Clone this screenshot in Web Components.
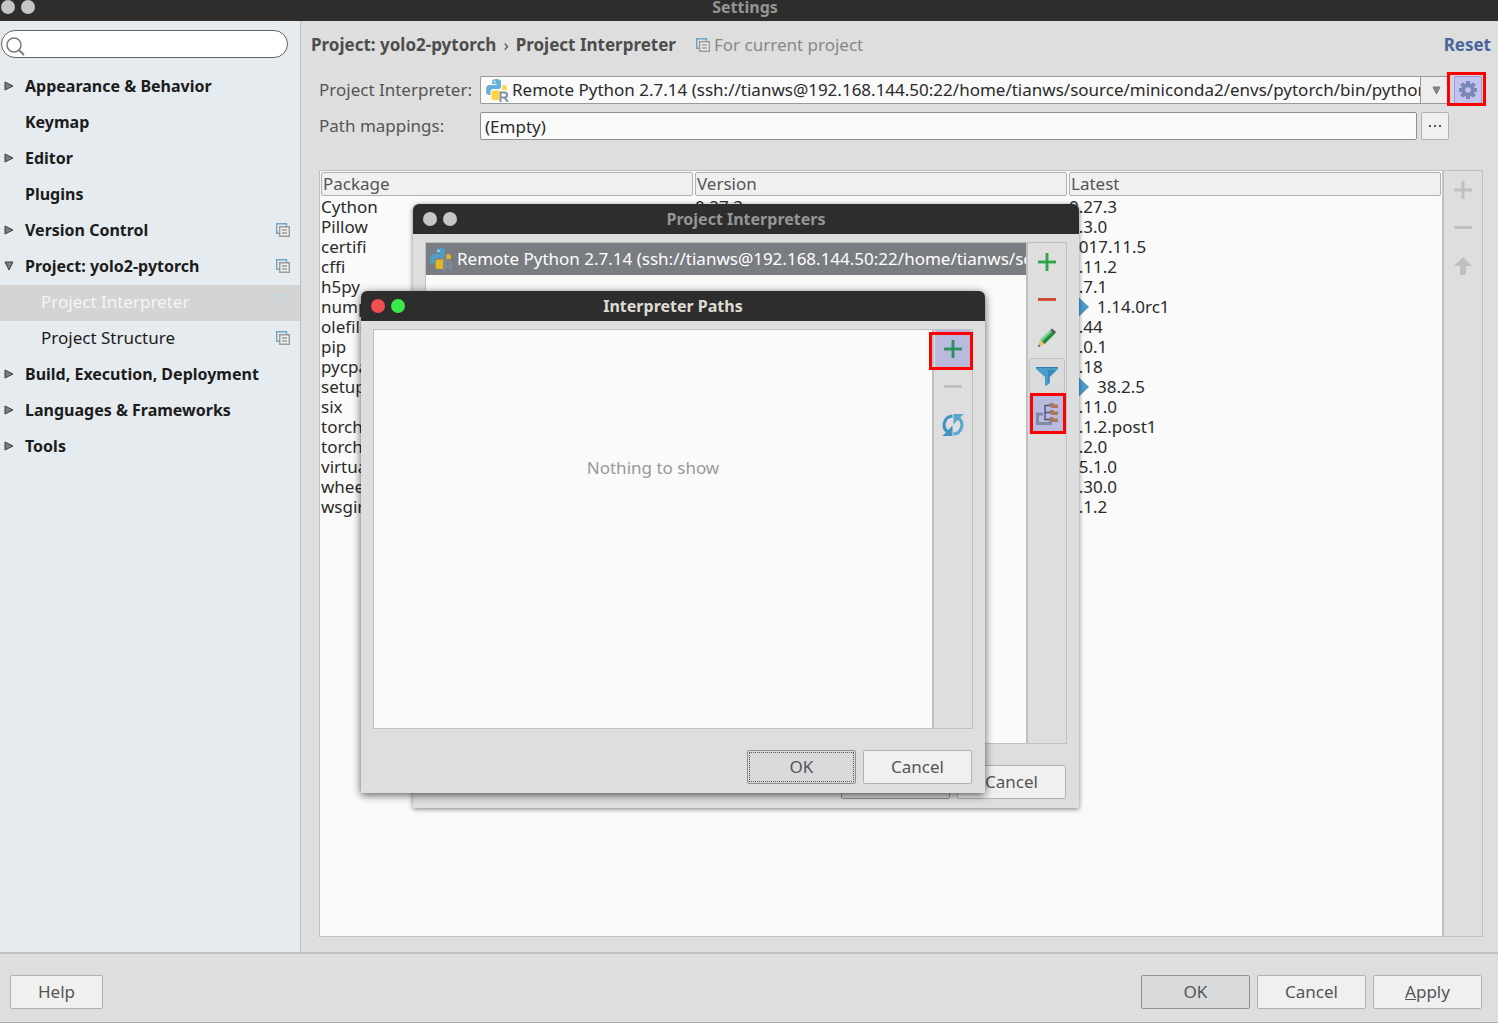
<!DOCTYPE html>
<html lang="en">
<head>
<meta charset="utf-8">
<title>Settings</title>
<style>
  html, body { height: 100%; }
  body {
    margin: 0;
    overflow: hidden;
    background: #dedede;
    color: #2b2b2b;
    font: 17px/20px "Noto Sans", "Open Sans", sans-serif;
    --panel: #dedede;
    --field: #fafafa;
    --line: #c0c0c0;
    --muted: #555555;
  }
</style>
</head>
<body>
<settings-window></settings-window>
<script>
const define = (name, html, setup) => {
  const template = document.createElement('template');
  template.innerHTML = '<style>*{box-sizing:border-box}</style>' + html;
  customElements.define(name, class extends HTMLElement {
    connectedCallback() {
      if (this.shadowRoot) return;
      const root = this.attachShadow({ mode: 'open' });
      root.append(template.content.cloneNode(true));
      if (setup) setup(this, root);
    }
  });
};

/* ---------- icons ---------- */
const python = (blue, yellow, letter) => `
  <path fill="${blue}" d="M7 6V3.500Q7 1 11.500 1T16 3.500V9Q16 11 14 11H8.500Q5.500 11 5.500 14V17H4Q1 17 1 12T4 7h7.500V6z"/>
  <path fill="${yellow}" d="M17.500 7H19.500Q22 7 22 12H15.500Q14 12 14 14V22H9Q6.500 22 6.500 19.500V15Q6.500 12.500 9 12.500H15Q17.500 12.500 17.500 10z"/>
  <circle cx="9.500" cy="3.700" r="1" fill="#fff" opacity=".85"/>
  <path fill="none" stroke="${letter}" stroke-width="2" d="M15.500 24V14.500h4a2.500 2.500 0 0 1 0 5H15.500m4 0L23 24"/>`;
const icons = {
  search: [20, `<circle cx="8" cy="9" r="7" fill="none" stroke="#777" stroke-width="1.500"/><path d="M13 14l5 5" stroke="#777" stroke-width="1.800"/>`],
  copies: [14, `<path d="M.7 11V.7H10.500V3M.7 10.300H3" fill="none" stroke="#6da5c8" stroke-width="1.400"/><path d="M3.700 3.700h9.600v9.600H3.700z" fill="#eceeef" stroke="#9b9b9b" stroke-width="1.400"/><path d="M6 7h5M6 10h5" stroke="#9b9b9b" stroke-width="1.400"/>`],
  copiesPale: [14, `<path d="M.7 11V.7H11" fill="none" stroke="#b3dcf2" stroke-width="1.400" stroke-dasharray="2 .7"/>`],
  python: [24, python('#68b0d8', '#ffd43b', '#7f929e')],
  pythonDark: [24, python('#4f9dc6', '#e2b822', '#7d8ba0')],
  gear: [20, `<g fill="#7684ae"><circle cx="10" cy="10" r="6.800"/><path d="M8 1h4v18H8z"/><path d="M8 1h4v18H8z" transform="rotate(45 10 10)"/><path d="M8 1h4v18H8z" transform="rotate(90 10 10)"/><path d="M8 1h4v18H8z" transform="rotate(135 10 10)"/></g><circle cx="10" cy="10" r="2.800" fill="#ccccec"/>`],
  plusGreen: [20, `<path d="M8.500 1h3v7.500H19v3h-7.500V19h-3v-7.500H1v-3h7.500z" fill="#3cb058"/><path d="M10 1v18M1 10h18" stroke="#279445"/>`],
  plusTint: [20, `<path d="M8.500 1h3v7.500H19v3h-7.500V19h-3v-7.500H1v-3h7.500z" fill="#38956a"/><path d="M10 1v18M1 10h18" stroke="#2a8a58"/>`],
  plusGrey: [20, `<path d="M8.500 1h3v7.500H19v3h-7.500V19h-3v-7.500H1v-3h7.500z" fill="#c0c0c0"/>`],
  minusRed: [20, `<path d="M1 8h18v3H1z" fill="#d9563f"/><path d="M1 9h18" stroke="#c13d30"/>`],
  minusGrey: [20, `<path d="M1 8h18v3H1z" fill="#c0c0c0"/>`],
  up: [20, `<path d="M10 1l9 9h-6v9H7v-9H1z" fill="#c0c0c0"/>`],
  pencil: [20, `<path d="M3 12L14 1.500l4 4L7.500 16z" fill="#43b55f"/><path d="M5.500 14L16 3.500l2 2L7.500 16z" fill="#238843"/><path d="M4 12.500L14.500 2.500" stroke="#8edb9c" stroke-width="1.300"/><path d="M13.500 2l1.500-1.500 4 3.500-1.500 2z" fill="#555"/><path d="M3 12l4.500 4L1 19z" fill="#eebc72"/><path d="M1.800 16.500L1 19l2.500-1z" fill="#444"/>`],
  filter: [22, `<path d="M0 2h22v2l-8 8v6l-5 3.500V12L0 4z" fill="#4b9cc9"/><path d="M0 2.500h22" stroke="#2f7fb0"/><path d="M12 5h8l-7 7v6h-1z" fill="#378bbb"/>`],
  tree: [22, `<path d="M7 11H1.500v9.500h13v-3.500" fill="none" stroke="#8288a8" stroke-width="3"/><path d="M14 2.500H9v14h5M9 9.500h5" fill="none" stroke="#4c5384" stroke-width="1.400"/><g fill="#a97960"><path d="M13.500 0h3.500l1.500 1.500H22V5h-6l-2.500-1.500z"/><path d="M13.500 7H17l1.500 1.500H22V12h-6l-2.500-1.500z"/><path d="M13.500 14H17l1.500 1.500H22V19h-6l-2.500-1.500z"/></g>`],
  refresh: [22, `<g fill="none" stroke-width="3"><path d="M10.500 2A9 9 0 0 0 5.500 18" stroke="#4293c2"/><path d="M11.500 20A9 9 0 0 0 16.500 4" stroke="#5aa4ce"/></g><path d="M10.500 11.500V22H.5z" fill="#4293c2"/><path d="M11.500 10.500V0h10z" fill="#5aa4ce"/>`],
  right: [10, `<path d="M1 1l8 4-8 4z" fill="#7d7d7d" stroke="#3d3d3d"/>`],
  down: [10, `<path d="M1 1h8L5 9z" fill="#7d7d7d" stroke="#3d3d3d"/>`],
  arrow: [22, `<path d="M1 6h9V1.500L20 11l-10 9.500V16H1z" fill="#4c9ccb"/>`]
};
const makeIcon = name => {
  const icon = document.createElement('ui-icon');
  icon.setAttribute('name', name);
  return icon;
};
define('ui-icon', `<style>:host{display:block;flex:none}svg{display:block}</style>`, (host, root) => {
  const [size, body] = icons[host.getAttribute('name')];
  root.innerHTML += `<svg width="${size}" height="${size}" viewBox="0 0 ${size} ${size}" aria-hidden="true">${body}</svg>`;
});

/* ---------- small controls ---------- */
define('title-bar', `<style>
  :host{display:grid;grid-template-columns:1fr auto 1fr;align-items:center;height:30px;padding:0 10px;background:#2d2d2d;color:#969593;font-size:16px;font-weight:700}
  :host([active]){color:#dfdbd2}
  .dots{display:flex;gap:6px}
  i{width:14px;height:14px;border-radius:50%;background:#c6c6c6}
  :host([active]) i:first-child{background:#f14e54}
  :host([active]) i:last-child{background:#39ea49}
</style><div class="dots"><i></i><i></i></div><slot></slot>`);

define('push-button', `<style>
  :host{display:block;width:109px}
  button{display:block;width:100%;height:34px;padding:0;border:1px solid #b2b2b2;border-radius:2px;background:#f0f0f0;color:var(--muted);font:inherit}
  :host([primary]) button{border-color:#8f9193;background:#d8dadb}
  :host([focused]) button{outline:1px dotted #555;outline-offset:-3px}
</style><button type="button"><slot></slot></button>`);

define('tool-button', `<style>
  :host{display:block;position:relative}
  button{display:grid;place-items:center;width:100%;height:38px;padding:0;border:0;background:none}
  :host([pressed]) button{height:36px;margin:1px 0;border:1px solid #c0c0c0;border-radius:3px;background:#dbdbdb}
  :host([marked]) button{background:#babade}
  :host([marked])::after{content:"";position:absolute;inset:var(--mark);border:3px solid #f00;pointer-events:none}
</style><button type="button"></button>`, (host, root) => {
  const button = root.querySelector('button');
  button.setAttribute('aria-label', host.getAttribute('label'));
  button.append(makeIcon(host.getAttribute('icon')));
});

define('tool-strip', `<style>
  :host{display:flex;flex-direction:column;flex:none;width:41px;border:1px solid var(--line);border-left-width:2px;padding:0 1px;background:var(--panel)}
</style><slot></slot>`);

define('search-field', `<style>
  :host{display:flex;align-items:center;height:28px;border:1px solid #636363;border-radius:14px;background:#fff;padding:0 4px}
  input{flex:1;min-width:0;border:0;outline:0;background:none;font:inherit}
  ui-icon{margin-top:3px}
</style><ui-icon name="search"></ui-icon><input type="text" aria-label="Search settings">`);

define('nav-item', `<style>
  :host{display:block;color:#1c1c1c;font-size:16px;font-weight:700}
  a{display:flex;align-items:center;height:36px;padding:0 10px 2px 4px;color:inherit;text-decoration:none}
  .arrow{width:21px}
  :host([child]){font-size:17px;font-weight:400}
  :host([child]) .arrow{width:37px}
  :host([selected]){background:#d4d4d4;color:#f5f5f5}
  .text{flex:1}
</style><a href="#"><span class="arrow"></span><span class="text"><slot></slot></span></a>`, (host, root) => {
  if (host.hasAttribute('arrow')) root.querySelector('.arrow').append(makeIcon(host.getAttribute('arrow')));
  if (host.hasAttribute('mark')) root.querySelector('a').append(makeIcon(host.getAttribute('mark')));
});

/* ---------- interpreter form ---------- */
define('interpreter-form', `<style>
  :host{display:flex;flex-direction:column;gap:8px;color:var(--muted)}
  .row{display:flex;align-items:center;height:28px}
  label{width:161px;flex:none}
  .combo{display:flex;flex:1;min-width:0;height:28px;border:1px solid #9a9a9a;border-right:0;border-radius:2px 0 0 2px;background:var(--field);align-items:center}
  .combo > ui-icon{margin:0 3px 0 4px}
  select{appearance:none;flex:1;min-width:0;width:0;height:26px;padding:0;margin:0;border:0;outline:0;background:none;color:#2b2b2b;font:inherit;text-overflow:clip}
  .drop{display:grid;place-items:center;width:28px;height:26px;padding-left:4px;border-left:1px solid #9a9a9a;background:#ededed;pointer-events:none}
  .gear{position:relative;display:grid;place-items:center;width:28px;height:28px;margin:0 1px 0 6px;padding:0;border:1px solid #9c9cc8;border-radius:2px;background:#ccccec}
  .gear::after{content:"";position:absolute;inset:-5px -5px -3px -8px;border:3px solid #f00;background:rgba(150,150,240,.16)}
  .paths{padding-right:34px;gap:4px}
  .paths label{margin-right:-4px}
  input{flex:1;min-width:0;height:28px;padding:0 4px;border:1px solid #8f8f8f;border-radius:2px;background:var(--field);color:#2b2b2b;font:inherit;outline:0}
  .more{display:grid;place-items:center;width:28px;height:28px;padding:0;border:1px solid #b2b2b2;border-radius:2px;background:#f0f0f0}
</style>
<div class="row">
  <label for="interpreter">Project Interpreter:</label>
  <div class="combo"><ui-icon name="python"></ui-icon>
    <select id="interpreter"><option>Remote Python 2.7.14 (ssh://tianws@192.168.144.50:22/home/tianws/source/miniconda2/envs/pytorch/bin/python)</option></select>
    <span class="drop"><svg width="9" height="9" viewBox="0 0 9 9"><path d="M1 1h7l-3.500 7z" fill="#888" stroke="#777"/></svg></span>
  </div>
  <button class="gear" type="button" aria-label="Interpreter options"><ui-icon name="gear"></ui-icon></button>
</div>
<div class="row paths">
  <label for="paths">Path mappings:</label>
  <input id="paths" type="text" value="(Empty)" readonly>
  <button class="more" type="button" aria-label="Edit path mappings"><svg width="12" height="2" viewBox="0 0 12 2"><path d="M0 0h2v2H0zM5 0h2v2H5zM10 0h2v2h-2z" fill="#555"/></svg></button>
</div>`);

/* ---------- package table ---------- */
const packages = [
  ['Cython', '0.27.3', '0.27.3'], ['Pillow', '', '4.3.0'], ['certifi', '', '2017.11.5'], ['cffi', '', '1.11.2'],
  ['h5py', '', '2.7.1'], ['numpy', '', '1.14.0rc1', true], ['olefile', '', '0.44'], ['pip', '', '9.0.1'],
  ['pycparser', '', '2.18'], ['setuptools', '', '38.2.5', true], ['six', '', '1.11.0'], ['torch', '', '0.1.2.post1'],
  ['torchvision', '', '0.2.0'], ['virtualenv', '', '15.1.0'], ['wheel', '', '0.30.0'], ['wsgiref', '', '0.1.2']
];
define('package-table', `<style>
  :host{display:block;flex:1;min-width:0;border:1px solid var(--line);border-right:0;background:var(--field)}
  table{width:100%;table-layout:fixed;border-collapse:separate;border-spacing:0}
  th{height:26px;padding:1px;text-align:left;font-weight:400;color:var(--muted)}
  th div{height:24px;line-height:22px;padding:0 1px;border:1px solid #b0b0b0;border-radius:2px;background:#f0f0f0}
  td{height:20px;padding:0 1px;white-space:nowrap}
  .newer{display:flex;align-items:center;gap:6px;height:20px}
</style>
<table><thead><tr><th><div>Package</div></th><th><div>Version</div></th><th><div>Latest</div></th></tr></thead><tbody></tbody></table>`, (host, root) => {
  root.querySelector('tbody').innerHTML = packages.map(([name, version, latest, newer]) =>
    `<tr><td>${name}</td><td>${version}</td><td>${newer ? `<span class="newer"><ui-icon name="arrow"></ui-icon>${latest}</span>` : latest}</td></tr>`).join('');
});

/* ---------- dialogs ---------- */
define('dialog-window', `<style>
  :host{display:flex;flex-direction:column;position:absolute;border-radius:6px 6px 0 0;background:var(--panel);box-shadow:0 1px 5px rgba(0,0,0,.5)}
  :host([active]){box-shadow:0 2px 9px rgba(0,0,0,.65)}
  title-bar{border-radius:6px 6px 0 0}
  .body{flex:1;min-height:0;display:flex;margin:8px 12px 21px}
  .list{flex:1;min-width:0;border:1px solid var(--line);border-right:0;background:var(--field)}
  .actions{display:flex;justify-content:flex-end;gap:7px;padding:0 13px 9px}
</style>
<title-bar></title-bar>
<div class="body"><div class="list"><slot></slot></div><tool-strip><slot name="tools"></slot></tool-strip></div>
<div class="actions"><push-button primary>OK</push-button><push-button>Cancel</push-button></div>`, (host, root) => {
  const bar = root.querySelector('title-bar');
  bar.textContent = host.getAttribute('heading');
  if (host.hasAttribute('active')) {
    bar.setAttribute('active', '');
    root.querySelector('push-button').setAttribute('focused', '');
  }
});

define('interpreter-entry', `<style>
  :host{display:flex;align-items:center;gap:4px;height:32px;padding:0 0 0 3px;overflow:hidden;white-space:nowrap;background:#797d82;color:#fff}
</style><ui-icon name="pythonDark"></ui-icon><span><slot></slot></span>`);

/* ---------- whole window ---------- */
define('settings-window', `<style>
  :host{display:flex;flex-direction:column;height:100%;position:relative;border-bottom:1px solid #aaa;box-sizing:border-box}
  .top{height:21px;background:#2d2d2d;flex:none}
  .top title-bar{padding:0 9px 0 1px;height:14px;line-height:14px}
  .middle{flex:1;min-height:0;display:flex}
  nav{width:301px;flex:none;border-right:1px solid var(--line);background:#e6ebef}
  search-field{margin:9px 12px 11px 1px}
  main{flex:1;min-width:0;display:flex;flex-direction:column;padding:12px 15px 15px 18px}
  header{display:flex;align-items:center;height:24px;margin:0 -8px 19px -8px;color:#4d4d4d;font-weight:700}
  header .sep{margin:0 7px;font-weight:400}
  header .scope{display:flex;align-items:center;gap:4px;margin-left:20px;color:#888;font-weight:400}
  header a{margin-left:auto;color:#4a649b;text-decoration:none}
  .packages{flex:1;min-height:0;display:flex;margin-top:30px}
  footer{display:flex;gap:7px;padding:21px 16px 13px 10px;border-top:2px solid var(--line)}
  footer .help{width:93px;margin-right:auto}
  .interpreters{left:413px;top:204px;width:666px;height:604px}
  .paths{left:361px;top:291px;width:624px;height:502px}
  .empty{padding-top:128px;text-align:center;color:#999}
</style>
<div class="top"><title-bar>Settings</title-bar></div>
<div class="middle">
  <nav>
    <search-field></search-field>
    <nav-item arrow="right">Appearance &amp; Behavior</nav-item>
    <nav-item>Keymap</nav-item>
    <nav-item arrow="right">Editor</nav-item>
    <nav-item>Plugins</nav-item>
    <nav-item arrow="right" mark="copies">Version Control</nav-item>
    <nav-item arrow="down" mark="copies">Project: yolo2-pytorch</nav-item>
    <nav-item child selected mark="copiesPale">Project Interpreter</nav-item>
    <nav-item child mark="copies">Project Structure</nav-item>
    <nav-item arrow="right">Build, Execution, Deployment</nav-item>
    <nav-item arrow="right">Languages &amp; Frameworks</nav-item>
    <nav-item arrow="right">Tools</nav-item>
  </nav>
  <main>
    <header><span>Project: yolo2-pytorch</span><span class="sep">›</span><span>Project Interpreter</span>
      <span class="scope"><ui-icon name="copies"></ui-icon>For current project</span><a href="#">Reset</a></header>
    <interpreter-form></interpreter-form>
    <div class="packages">
      <package-table></package-table>
      <tool-strip>
        <tool-button icon="plusGrey" label="Install"></tool-button>
        <tool-button icon="minusGrey" label="Uninstall"></tool-button>
        <tool-button icon="up" label="Upgrade"></tool-button>
      </tool-strip>
    </div>
  </main>
</div>
<footer><push-button class="help">Help</push-button><push-button primary>OK</push-button><push-button>Cancel</push-button><push-button><u>A</u>pply</push-button></footer>

<dialog-window class="interpreters" heading="Project Interpreters">
  <interpreter-entry>Remote Python 2.7.14 (ssh://tianws@192.168.144.50:22/home/tianws/source</interpreter-entry>
  <tool-button slot="tools" icon="plusGreen" label="Add"></tool-button>
  <tool-button slot="tools" icon="minusRed" label="Remove"></tool-button>
  <tool-button slot="tools" icon="pencil" label="Edit"></tool-button>
  <tool-button slot="tools" icon="filter" label="Filter" pressed></tool-button>
  <tool-button slot="tools" icon="tree" label="Show paths" marked style="--mark:-2px -1px -1px 1px"></tool-button>
</dialog-window>
<dialog-window class="paths" heading="Interpreter Paths" active>
  <div class="empty">Nothing to show</div>
  <tool-button slot="tools" icon="plusTint" label="Add" marked style="--mark:2px -2px -2px -6px"></tool-button>
  <tool-button slot="tools" icon="minusGrey" label="Remove"></tool-button>
  <tool-button slot="tools" icon="refresh" label="Reload"></tool-button>
</dialog-window>`);
</script>
</body>
</html>
